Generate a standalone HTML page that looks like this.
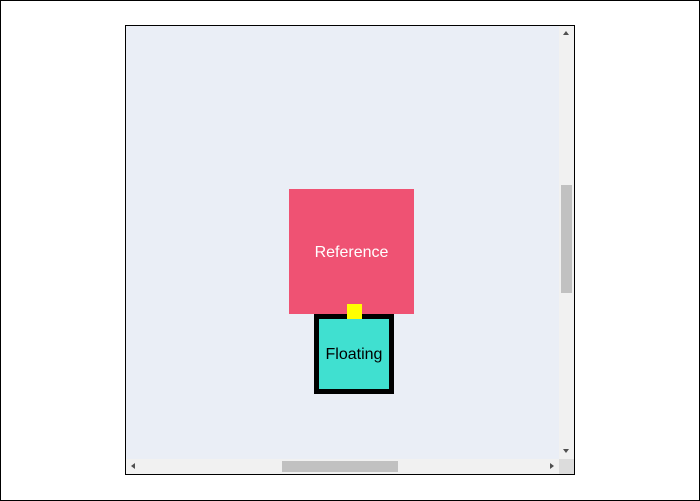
<!DOCTYPE html>
<html><head><style>
*{margin:0;padding:0;box-sizing:border-box}
body{width:700px;height:501px;background:#fff;position:relative;overflow:hidden;font-family:"Liberation Sans",sans-serif}
.frame{position:absolute;left:0;top:0;width:700px;height:501px;border:1px solid #000}
.c{position:absolute;left:125px;top:25px;width:450px;height:450px;border:1px solid #000;background:#eaeef6}
.vs{position:absolute;left:559px;top:26px;width:15px;height:433px;background:#f1f1f1}
.hs{position:absolute;left:126px;top:459px;width:433px;height:15px;background:#f1f1f1}
.corner{position:absolute;left:559px;top:459px;width:15px;height:15px;background:#dcdcdc}
.vt{position:absolute;left:561px;top:185px;width:11px;height:108px;background:#c1c1c1}
.ht{position:absolute;left:282px;top:461px;width:116px;height:11px;background:#c1c1c1}
.ref{position:absolute;left:289px;top:189px;width:125px;height:125px;background:#ef5273;color:#fff;font-size:16px;display:flex;align-items:center;justify-content:center;padding-top:2px}
.fl{position:absolute;left:314px;top:314px;width:80px;height:80px;background:#40e0d0;border:5px solid #000;font-size:16px;display:flex;align-items:center;justify-content:center;color:#000;padding-top:2px}
.y{position:absolute;left:347px;top:304px;width:15px;height:15px;background:#ff0}
.a{position:absolute;width:0;height:0}
</style></head><body>
<div class="frame"></div>
<div class="c"></div>
<div class="vs"></div><div class="hs"></div><div class="corner"></div>
<div class="vt"></div><div class="ht"></div>
<div class="a" style="left:563px;top:31px;border-left:3.5px solid transparent;border-right:3.5px solid transparent;border-bottom:4px solid #505050"></div>
<div class="a" style="left:563px;top:449px;border-left:3.5px solid transparent;border-right:3.5px solid transparent;border-top:4px solid #505050"></div>
<div class="a" style="left:131px;top:463px;border-top:3.5px solid transparent;border-bottom:3.5px solid transparent;border-right:4px solid #505050"></div>
<div class="a" style="left:550px;top:463px;border-top:3.5px solid transparent;border-bottom:3.5px solid transparent;border-left:4px solid #505050"></div>
<div class="ref">Reference</div>
<div class="fl">Floating</div>
<div class="y"></div>
</body></html>
